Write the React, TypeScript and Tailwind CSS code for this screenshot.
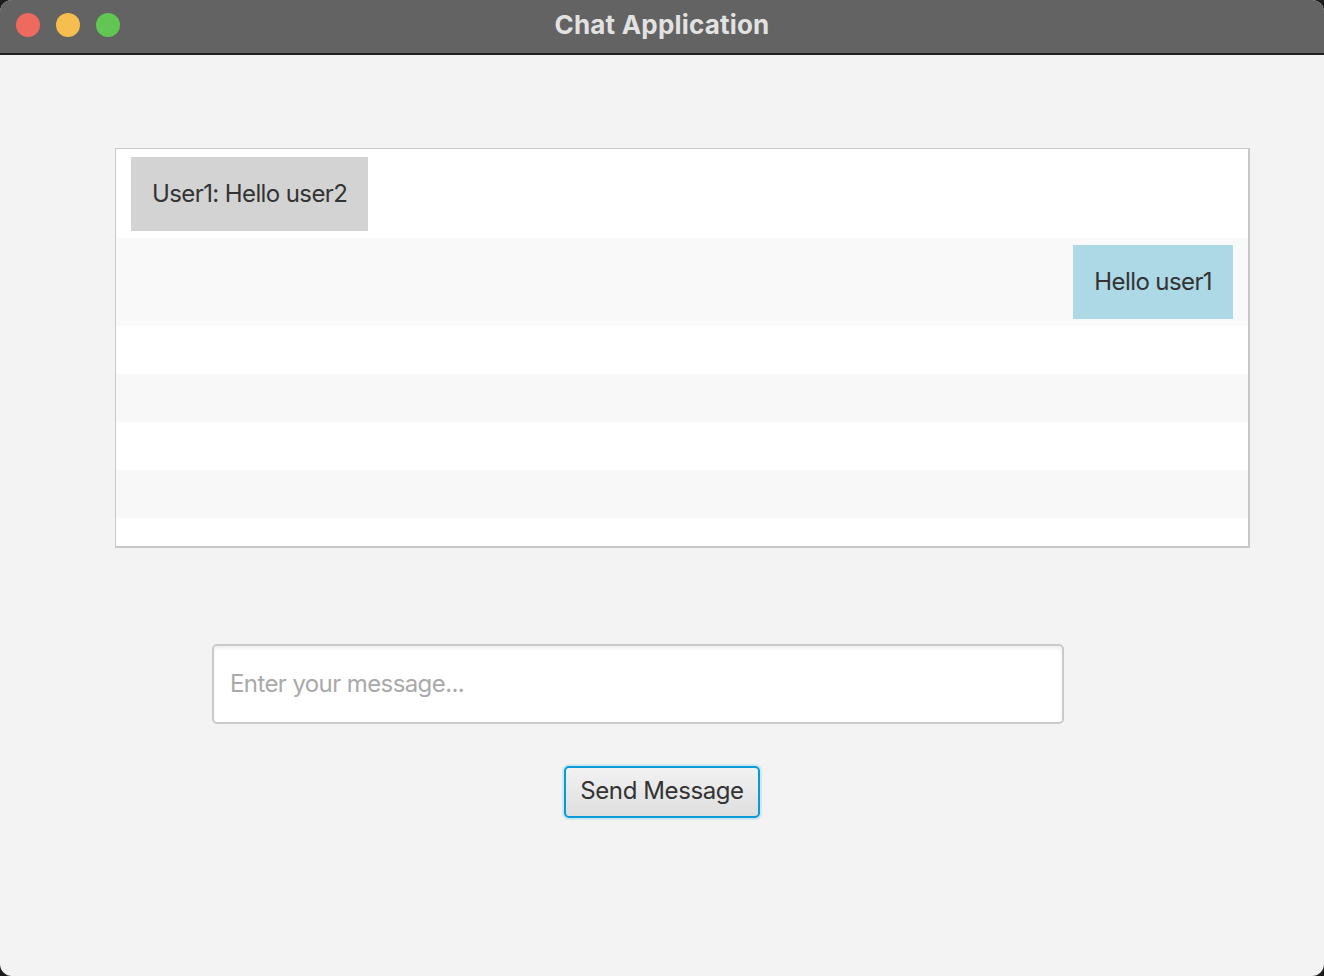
import React from 'react';

const rows = [
  { id: 1, text: 'User1: Hello user2', mine: false },
  { id: 2, text: 'Hello user1', mine: true },
];

const emptyRows = [0, 1, 2, 3, 4];

const App = () => {
  return (
    <div className="w-[1324px] h-[976px] bg-[#1c1c1c] font-['Inter',sans-serif]">
      <div className="w-full h-full rounded-[12px] overflow-hidden bg-[#f3f3f3] flex flex-col">
        {/* title bar */}
        <div className="h-[55px] shrink-0 bg-[#636363] border-b-2 border-[#1f1f1f] relative flex items-center justify-center pb-[4px]">
          <div className="absolute left-[16px] top-[13px] flex gap-[16px]">
            <span className="w-[24px] h-[24px] rounded-full bg-[#ee6a5f]" />
            <span className="w-[24px] h-[24px] rounded-full bg-[#f5be4f]" />
            <span className="w-[24px] h-[24px] rounded-full bg-[#62c655]" />
          </div>
          <h1 className="text-[26px] font-bold text-[#e2e2e2] tracking-[0.2px]">Chat Application</h1>
        </div>

        {/* message list */}
        <div className="mt-[93px] ml-[115px] w-[1135px] h-[400px] border-2 border-[#c8c8c8] border-t border-l bg-white flex flex-col overflow-hidden">
          {rows.map((r, i) => (
            <div
              key={r.id}
              className={`shrink-0 flex items-start px-[15px] ${i % 2 === 0 ? 'bg-white justify-start h-[89px] pt-[8px]' : 'bg-[#f9f9f9] justify-end h-[88px] pt-[7px]'}`}
            >
              <div className={`h-[74px] px-[21px] flex items-center text-[24px] text-[#333333] tracking-[-0.6px] ${r.mine ? 'bg-[#add8e6]' : 'bg-[#d3d3d3]'}`}>
                {r.text}
              </div>
            </div>
          ))}
          {emptyRows.map((n) => (
            <div key={n} className={`h-[48px] shrink-0 ${n % 2 === 0 ? 'bg-white' : 'bg-[#f8f8f8]'}`} />
          ))}
        </div>

        {/* input */}
        <div className="mt-[96px] ml-[212px] w-[852px] h-[80px] rounded-[5px] border-2 border-[#cacaca] bg-white shadow-[inset_0_3px_3px_rgba(0,0,0,0.06)] flex items-center px-[16px]">
          <input
            placeholder="Enter your message..."
            className="w-full bg-transparent outline-none text-[24px] text-[#333] placeholder:text-[#a9a9a9] tracking-[-0.6px]"
          />
        </div>

        {/* button */}
        <div className="mt-[42px] ml-[564px]">
          <button className="w-[196px] h-[52px] rounded-[5px] border-2 border-[#0a9ad8] ring-2 ring-[#cfe8f3] bg-gradient-to-b from-[#f2f2f2] to-[#dedede] text-[24px] text-[#333333] tracking-[-0.4px] flex items-center justify-center pb-[2px]">
            Send Message
          </button>
        </div>
      </div>
    </div>
  );
};

export default App;
